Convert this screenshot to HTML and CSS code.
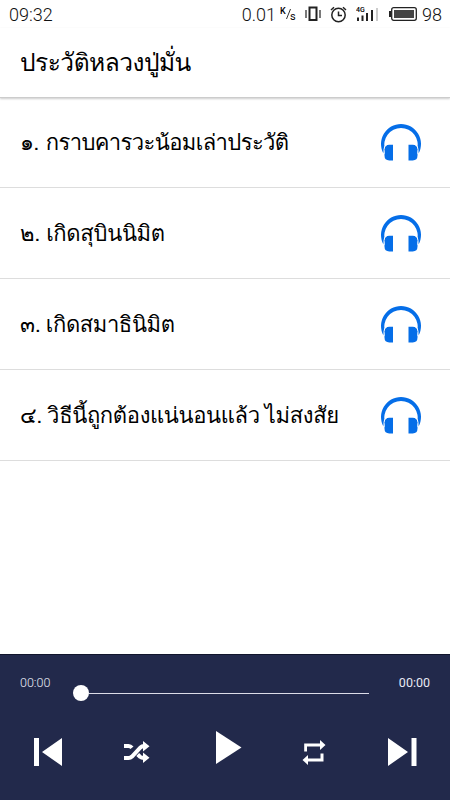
FILE: index.html
```html
<!DOCTYPE html>
<html lang="th">
<head>
<meta charset="utf-8">
<title>ประวัติหลวงปู่มั่น</title>
<link rel="stylesheet" href="styles.css">
</head>
<body>
<svg width="0" height="0" class="defs">
  <symbol id="headphones" viewBox="0 0 40 37">
    <path d="M2.400 29.500A20 20 0 1 1 37.600 29.500L36 25.500A16.700 16.700 0 1 0 4 25.500Z"/>
    <path d="M12 20.7v15.7H8.3Q3.5 36.4 3.5 31.5V25.500Q3.500 20.700 8.300 20.700ZM27.500 20.700v15.700h4.200Q36.500 36.400 36.500 31.500V25.500Q36.500 20.700 31.700 20.700Z"/>
    <path class="gap" d="M3 30V25.500Q3 21.500 6 20.500M37 30V25.500Q37 21.500 34 20.500"/>
  </symbol>
</svg>
<div class="screen">
  <div class="status">
    <span class="clock">09:32</span>
    <span class="speed">0.01</span>
    <svg class="unit" width="17" height="16" viewBox="0 0 17 16"><text x="0" y="8" class="unit-top">K</text><path d="M6.500 13 10.500 3" stroke="#333" fill="none"/><text x="10" y="14" class="unit-bottom">s</text></svg>
    <svg class="vibrate" width="16" height="16" viewBox="0 0 16 16" fill="none" stroke="#222"><path stroke-width="2" d="M4.500 1.500h7v12.500h-7z"/><path stroke-width="1.200" d="M1 4v8M15 4v8"/></svg>
    <svg class="alarm" width="17" height="17" viewBox="0 0 17 17" fill="none" stroke="#222" stroke-width="1.500"><circle cx="8.500" cy="9" r="6.700"/><path d="M8.500 5.500V9.500H12M1 4 4 1.300M13 1.300 16 4"/></svg>
    <svg class="signal" width="23" height="16" viewBox="0 0 23 16"><text x="0" y="6" class="net">4G</text><path fill="#222" d="M1 11.500h2V15H1zM5.500 9.500h2V15h-2zM10 7h2v8h-2zM15 4h2v11h-2z"/><path fill="#ccc" d="M20 2h2v13h-2z"/></svg>
    <svg class="battery" width="28" height="14" viewBox="0 0 28 14"><rect x="2.700" y="0.700" width="24.600" height="12.600" rx="2" fill="none" stroke="#222" stroke-width="1.300"/><path d="M0 4h2v6H0z" fill="#222"/><path d="M5 3h20v8H5z" fill="#444"/></svg>
    <span class="level">98</span>
  </div>
  <header class="header"><h1 class="title">ประวัติหลวงปู่มั่น</h1></header>
  <main class="list">
    <div class="row"><span class="name n1">๑. กราบคารวะน้อมเล่าประวัติ</span><svg class="phones"><use href="#headphones"/></svg></div>
    <div class="row"><span class="name n2">๒. เกิดสุบินนิมิต</span><svg class="phones"><use href="#headphones"/></svg></div>
    <div class="row"><span class="name n3">๓. เกิดสมาธินิมิต</span><svg class="phones"><use href="#headphones"/></svg></div>
    <div class="row"><span class="name n4">๔. วิธีนี้ถูกต้องแน่นอนแล้ว ไม่สงสัย</span><svg class="phones"><use href="#headphones"/></svg></div>
  </main>
  <footer class="player">
    <div class="progress">
      <span class="time">00:00</span>
      <div class="slider"><span class="knob"></span><span class="track"></span></div>
      <span class="time end">00:00</span>
    </div>
    <div class="controls">
      <svg width="28" height="28" viewBox="0 0 28 28"><path d="M0 0h5v28H0zM28 0v28L8 14z"/></svg>
      <svg width="26" height="22" viewBox="0 0 26 22"><g fill="none" stroke="#fff" stroke-width="4"><path d="M0 17H4.500Q6.500 17 8 15.500L16.500 6.500Q18 5 20 5M0 5H4.500Q6.500 5 8 6.800"/><path d="M13.700 13.500 16 15.700Q17.500 17 20 17"/></g><path d="M19 0 25.500 5.300 19 10.500zM19 11.500 25.500 16.700 19 22z"/></svg>
      <svg class="play" width="26" height="33" viewBox="0 0 26 33"><path d="M0 0 25.500 16.500 0 33z"/></svg>
      <svg width="24" height="25" viewBox="0 0 24 25"><path d="M2.200 11.500V3.500H18V0L23.500 5 18 10V6.500H5V11.500zM21.500 13.500V21.500H6V25L.500 20 6 15V18.500H18.500V13.500z"/></svg>
      <svg width="29" height="28" viewBox="0 0 29 28"><path d="M0 0v28L20 14zM23.500 0h5v28h-5z"/></svg>
    </div>
  </footer>
</div>
</body>
</html>
```
FILE: styles.css
```css
* { box-sizing: border-box; }
body { margin: 0; background: #fff; color: #000; font-family: Roboto, "Noto Sans", sans-serif; }
.defs { position: absolute; }
.screen { width: 450px; height: 800px; display: flex; flex-direction: column; overflow: hidden; }
.status { height: 28px; display: flex; align-items: center; padding: 0 8px 0 9px; font-size: 18px; color: #111; font-weight: 300; flex: none; }
.clock { margin-right: auto; }
.unit { margin-left: 4px; }
.vibrate { margin-left: 8px; }
.alarm { margin-left: 9px; }
.signal { margin-left: 9px; }
.battery { margin-left: 10px; }
.level { margin-left: 5px; }
.unit-top { font-size: 9px; font-weight: 500; }
.unit-bottom { font-size: 11px; font-weight: 400; }
.net { font-size: 7px; font-weight: 500; }
.header { height: 70px; flex: none; display: flex; align-items: center; padding: 0 20px; border-bottom: 1px solid #ccc; box-shadow: 0 1px 2px #ccc; }
.title, .name { font-family: Loma, "Noto Sans Thai Looped", sans-serif; font-weight: 400; line-height: 36px; white-space: nowrap; }
.title { margin: 0; font-size: 24.500px; letter-spacing: -0.5px; }
.name { font-size: 22px; padding-top: 1px; }
.n1 { letter-spacing: -0.6px; }
.n2 { letter-spacing: -0.3px; word-spacing: -1px; }
.n3 { letter-spacing: -0.4px; word-spacing: -1.5px; }
.n4 { letter-spacing: -0.35px; word-spacing: -2px; }
.list { flex: 1; }
.row { height: 91px; display: flex; align-items: center; justify-content: space-between; padding: 0 29px 0 20px; border-bottom: 1px solid #ddd; }
.row:first-child { height: 90px; }
.phones { width: 40px; height: 37px; flex: none; fill: #056ee8; }
.gap { fill: none; stroke: #fff; stroke-width: 1px; }
.player { height: 146px; flex: none; background: #22294b; border-top: 1px solid #11152c; color: #e8eaf4; }
.progress { display: flex; height: 57px; padding: 19px 20px 0; }
.time { width: 53px; font-size: 12.5px; line-height: 18px; font-weight: 300; }
.end { width: 61px; text-align: right; font-weight: 400; }
.slider { display: flex; align-items: center; width: 296px; height: 16px; margin-top: 11px; }
.knob { width: 16px; height: 16px; border-radius: 50%; background: #fff; flex: none; }
.track { flex: 1; height: 1px; background: #dcdce8; }
.controls { display: grid; grid-template-columns: repeat(5, 88.5px); justify-content: center; justify-items: center; align-items: center; height: 80px; fill: #fff; }
.play { margin: 0 0 10px 7px; }
```
